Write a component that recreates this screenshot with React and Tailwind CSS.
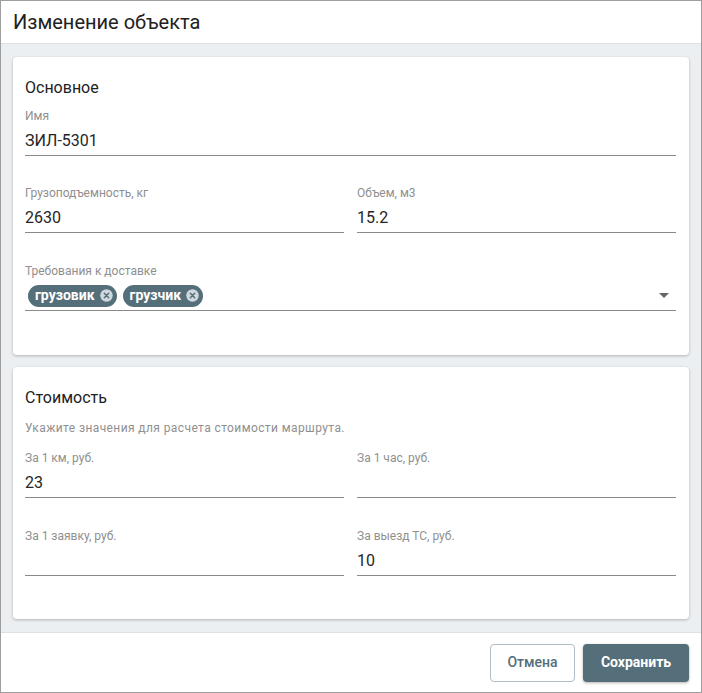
import React from "react";

function Field({ label, value, className = "" }) {
  return (
    <div className={`flex flex-col ${className}`}>
      <div className="text-[12px] leading-[14px] text-[#8f8f8f]">{label}</div>
      <div className="h-[33px] pt-[8px] text-[16px] leading-[19px] text-[#262626] border-b border-[#8a8a8a]">
        {value}
      </div>
    </div>
  );
}

function Chip({ text }) {
  return (
    <span className="inline-flex items-center h-[22px] rounded-full bg-[#546e7a] pl-[7px] pr-[3px] text-white text-[14px] font-bold gap-[4px]">
      {text}
      <svg width="15" height="15" viewBox="0 0 24 24">
        <circle cx="12" cy="12" r="10" fill="#cfd8dc" />
        <path d="M8.5 8.5l7 7M15.5 8.5l-7 7" stroke="#546e7a" strokeWidth="2.4" strokeLinecap="round" />
      </svg>
    </span>
  );
}

export default function App() {
  return (
    <div
      className="w-[702px] h-[693px] border border-[#9e9e9e] bg-white flex flex-col"
      style={{ fontFamily: "Roboto, 'Liberation Sans', sans-serif" }}
    >
      <div className="h-[43px] flex items-center px-[12px] text-[20px] font-normal text-[#212121] border-b border-[#e0e0e0]">
        Изменение объекта
      </div>
      <div className="flex-1 bg-[#eceff1] px-[12px] pt-[13px] flex flex-col gap-[12px]">
        <div className="bg-white rounded-[4px] shadow-[0_1px_3px_rgba(0,0,0,0.25)] pl-[12px] pr-[13px] pt-[21px] h-[298px]">
          <div className="text-[16px] leading-[19px] text-[#212121]">Основное</div>
          <Field label="Имя" value="ЗИЛ-5301" className="mt-[12px]" />
          <div className="grid grid-cols-2 gap-x-[13px] mt-[30px]">
            <Field label="Грузоподъемность, кг" value="2630" />
            <Field label="Объем, м3" value="15.2" />
          </div>
          <div className="mt-[31px] flex flex-col">
            <div className="text-[12px] leading-[14px] text-[#8f8f8f]">Требования к доставке</div>
            <div className="h-[33px] pt-[3px] flex items-center border-b border-[#8a8a8a] pl-[3px] gap-[6px]">
              <Chip text="грузовик" />
              <Chip text="грузчик" />
              <div className="flex-1" />
              <svg width="10" height="5" viewBox="0 0 10 5" className="mr-[7px]">
                <path d="M0 0h10L5 5z" fill="#666" />
              </svg>
            </div>
          </div>
        </div>
        <div className="bg-white rounded-[4px] shadow-[0_1px_3px_rgba(0,0,0,0.25)] pl-[12px] pr-[13px] pt-[21px] h-[252px]">
          <div className="text-[16px] leading-[19px] text-[#212121]">Стоимость</div>
          <div className="mt-[14px] text-[12px] leading-[14px] tracking-[0.4px] text-[#8f8f8f]">
            Укажите значения для расчета стоимости маршрута.
          </div>
          <div className="grid grid-cols-2 gap-x-[13px] mt-[16px]">
            <Field label="За 1 км, руб." value="23" />
            <Field label="За 1 час, руб." value="" />
          </div>
          <div className="grid grid-cols-2 gap-x-[13px] mt-[31px]">
            <Field label="За 1 заявку, руб." value="" />
            <Field label="За выезд ТС, руб." value="10" />
          </div>
        </div>
      </div>
      <div className="h-[60px] flex items-center justify-end gap-[8px] px-[12px] border-t border-[#e0e0e0]">
        <button className="h-[38px] w-[85px] rounded-[4px] border border-[#b0bec5] bg-white text-[#546e7a] text-[14px] font-medium">
          Отмена
        </button>
        <button className="h-[38px] w-[106px] rounded-[4px] bg-[#546e7a] text-white text-[14px] font-bold shadow-[0_1px_3px_rgba(0,0,0,0.3)]">
          Сохранить
        </button>
      </div>
    </div>
  );
}
